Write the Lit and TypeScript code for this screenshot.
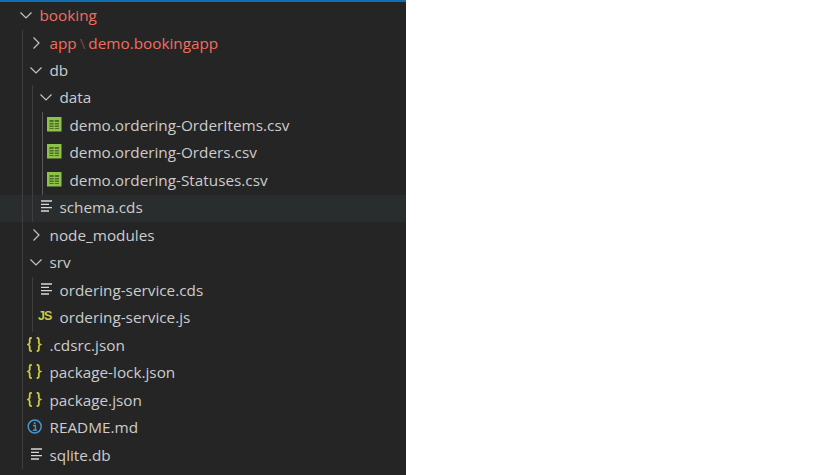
import { LitElement, html, css, svg } from "lit";
import { customElement } from "lit/decorators.js";

type Row = {
  d: number;
  label: string;
  kind: "open" | "closed" | "csv" | "list" | "js" | "json" | "info";
  red?: boolean;
  sel?: boolean;
  compact?: string;
};

const rows: Row[] = [
  { d: 0, label: "booking", kind: "open", red: true },
  { d: 1, label: "app", compact: "demo.bookingapp", kind: "closed", red: true },
  { d: 1, label: "db", kind: "open" },
  { d: 2, label: "data", kind: "open" },
  { d: 3, label: "demo.ordering-OrderItems.csv", kind: "csv" },
  { d: 3, label: "demo.ordering-Orders.csv", kind: "csv" },
  { d: 3, label: "demo.ordering-Statuses.csv", kind: "csv" },
  { d: 2, label: "schema.cds", kind: "list", sel: true },
  { d: 1, label: "node_modules", kind: "closed" },
  { d: 1, label: "srv", kind: "open" },
  { d: 2, label: "ordering-service.cds", kind: "list" },
  { d: 2, label: "ordering-service.js", kind: "js" },
  { d: 1, label: ".cdsrc.json", kind: "json" },
  { d: 1, label: "package-lock.json", kind: "json" },
  { d: 1, label: "package.json", kind: "json" },
  { d: 1, label: "README.md", kind: "info" },
  { d: 1, label: "sqlite.db", kind: "list" },
];

const chevronOpen = svg`<svg width="14" height="14" viewBox="0 0 14 14"><path d="M1.500 4.500 7 10l5.500-5.500" fill="none" stroke="#c5c5c5" stroke-width="1.200"/></svg>`;
const chevronClosed = svg`<svg width="14" height="14" viewBox="0 0 14 14"><path d="M4.500 1.500 10 7l-5.500 5.500" fill="none" stroke="#c5c5c5" stroke-width="1.200"/></svg>`;
const csvIcon = svg`<svg width="15" height="15" viewBox="0 0 15 15"><rect x="0" y="0" width="14.500" height="14.500" fill="#8dc149"/><path d="M2.500 3h4.200v9H2.500zM7.800 3H12v9H7.800z" fill="#4f6e2b"/><path d="M2.500 5.500h9.500M2.500 8h9.500M2.500 10.500h9.500" stroke="#8dc149" stroke-width="1" fill="none"/></svg>`;
const listIcon = svg`<svg width="12" height="12" viewBox="0 0 12 12"><path d="M0 1h11M0 4.400h8M0 7.700h11M0 11h8" stroke="#d4d7d6" stroke-width="1.300" fill="none"/></svg>`;
const jsonIcon = svg`<svg width="15" height="15" viewBox="0 0 15 15"><path d="M4.800 1H3.900C3 1 2.700 1.500 2.700 2.400V5.500C2.700 6.500 2.200 7 1.200 7.500 2.200 8 2.700 8.500 2.700 9.500V12.600C2.700 13.500 3 14 3.900 14H4.800M9.700 1h.9C11.500 1 11.800 1.500 11.800 2.400V5.500C11.800 6.500 12.300 7 13.300 7.500 12.300 8 11.800 8.500 11.800 9.500V12.600C11.800 13.500 11.500 14 10.600 14H9.700" fill="none" stroke="#cbcb41" stroke-width="1.800"/></svg>`;
const infoIcon = svg`<svg width="16" height="16" viewBox="0 0 16 16"><circle cx="7.700" cy="7.500" r="6.500" fill="none" stroke="#4695c8" stroke-width="1.500"/><path d="M6 6.500h2.400V11M5.900 11.200h4" fill="none" stroke="#4695c8" stroke-width="1.400"/><rect x="6.800" y="3.300" width="1.800" height="1.700" fill="#4695c8"/></svg>`;

@customElement("app-root")
export class AppRoot extends LitElement {
  static styles = css`
    :host {
      display: block;
      width: 840px;
      height: 475px;
      background: #fff;
      overflow: hidden;
    }
    .panel {
      box-sizing: border-box;
      width: 406px;
      height: 475px;
      background: #252526;
      border-top: 2px solid #0e70b4;
      padding-top: 0.300px;
      overflow: hidden;
      font-family: "Open Sans", "Noto Sans", sans-serif;
      font-size: 15.300px;
      color: #cccccc;
    }
    .row {
      display: flex;
      align-items: stretch;
      height: 27.470px;
      padding-left: 17px;
    }
    .row.sel {
      background: #2a2d2e;
    }
    .guide {
      flex: none;
      width: 10px;
      background: linear-gradient(#3e3e3e, #3e3e3e) 5px 0 / 1px 100% no-repeat;
    }
    .guide.bright {
      background-image: linear-gradient(#585858, #585858);
    }
    .slot {
      flex: none;
      box-sizing: border-box;
      width: 23px;
      display: flex;
      align-items: center;
      padding-bottom: 3px;
    }
    .slot.chevron {
      padding-bottom: 2px;
      padding-left: 2px;
    }
    .slot.list {
      padding-left: 4px;
      padding-bottom: 4px;
    }
    .slot.script {
      padding-left: 1px;
      padding-bottom: 4px;
    }
    .js {
      font-family: "Liberation Sans", sans-serif;
      font-weight: 700;
      font-size: 12.500px;
      letter-spacing: -1px;
      color: #cbcb41;
    }
    .label {
      display: flex;
      align-items: center;
      white-space: nowrap;
      margin-left: -0.500px;
      padding-bottom: 2px;
    }
    .red {
      color: #f26d5e;
    }
    .sep {
      color: #7a4a42;
      margin: 0 3px;
    }
  `;

  private icon(r: Row) {
    switch (r.kind) {
      case "open":
        return html`<span class="slot chevron">${chevronOpen}</span>`;
      case "closed":
        return html`<span class="slot chevron">${chevronClosed}</span>`;
      case "csv":
        return html`<span class="slot">${csvIcon}</span>`;
      case "list":
        return html`<span class="slot list">${listIcon}</span>`;
      case "js":
        return html`<span class="slot script"><span class="js">JS</span></span>`;
      case "json":
        return html`<span class="slot">${jsonIcon}</span>`;
      case "info":
        return html`<span class="slot">${infoIcon}</span>`;
    }
  }

  render() {
    return html`<div class="panel">
      ${rows.map(
        (r) => html`<div class="row ${r.sel ? "sel" : ""}">
          ${Array.from({ length: r.d }, (_, i) => html`<span class="guide ${i === 2 ? "bright" : ""}"></span>`)}
          ${this.icon(r)}
          <span class="label ${r.red ? "red" : ""}"
            >${r.label}${r.compact
              ? html`<span class="sep">\\</span>${r.compact}`
              : ""}</span
          >
        </div>`
      )}
    </div>`;
  }
}
